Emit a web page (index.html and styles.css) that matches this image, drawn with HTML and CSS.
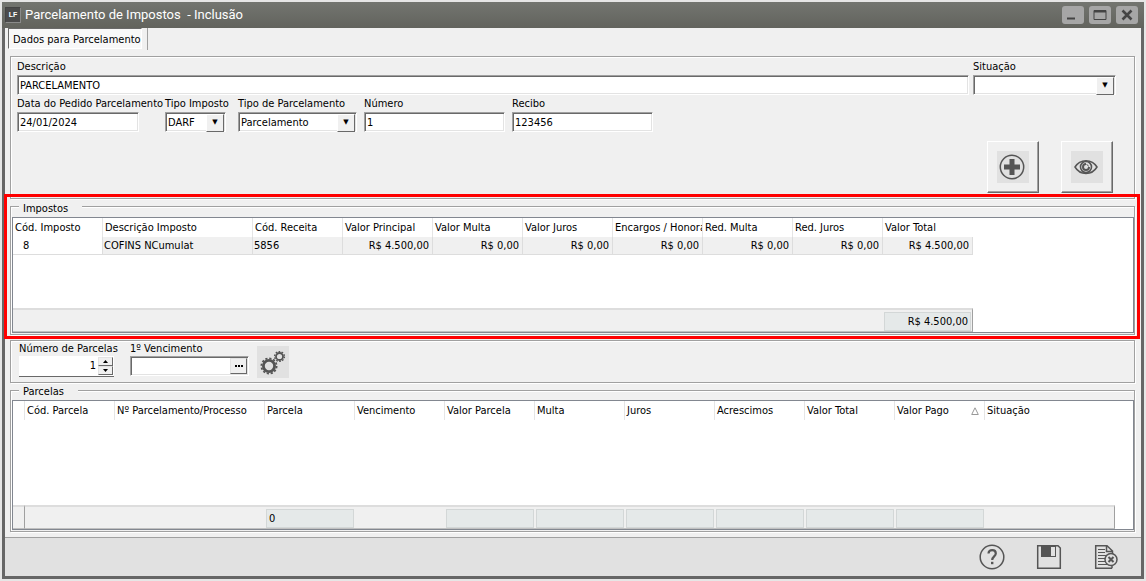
FILE: index.html
```html
<!DOCTYPE html>
<html lang="pt-BR">
<head>
<meta charset="utf-8">
<title>Parcelamento de Impostos - Inclusão</title>
<link rel="stylesheet" href="styles.css">
</head>
<body>
<div class="window">
  <header class="titlebar">
    <span class="app-icon">LF</span>
    <h1>Parcelamento de Impostos&nbsp; - Inclusão</h1>
    <div class="window-buttons">
      <button type="button" aria-label="Minimizar"><svg viewBox="0 0 22 18"><path d="M5 12.500h8" stroke="#444" stroke-width="2"/></svg></button>
      <button type="button" aria-label="Maximizar"><svg viewBox="0 0 22 18"><path d="M5 4.500h12v9H5z" fill="none" stroke="#444"/><path d="M5 5.500h12" stroke="#444" stroke-width="2"/></svg></button>
      <button type="button" aria-label="Fechar"><svg viewBox="0 0 22 18"><path d="M6.500 4.500l9 9M15.500 4.500l-9 9" stroke="#444" stroke-width="2.600"/></svg></button>
    </div>
  </header>
  <main class="content">
    <nav class="tabs"><button type="button" class="tab">Dados para Parcelamento</button></nav>

    <section class="panel form">
      <div class="row-top">
        <div class="field"><label for="descricao">Descrição</label><input id="descricao" class="box" value="PARCELAMENTO"></div>
        <div class="field"><label for="situacao">Situação</label><span class="combo"><select id="situacao" class="box"><option></option></select></span></div>
      </div>
      <div class="row-mid">
        <div class="field"><label for="data">Data do Pedido Parcelamento</label><input id="data" class="box date" value="24/01/2024"></div>
        <div class="field"><label for="tipo">Tipo Imposto</label><span class="combo short"><select id="tipo" class="box"><option>DARF</option></select></span></div>
        <div class="field"><label for="tipoparc">Tipo de Parcelamento</label><span class="combo"><select id="tipoparc" class="box"><option>Parcelamento</option></select></span></div>
        <div class="field"><label for="numero">Número</label><input id="numero" class="box" value="1"></div>
        <div class="field"><label for="recibo">Recibo</label><input id="recibo" class="box" value="123456"></div>
      </div>
      <div class="actions">
        <button type="button" class="big" aria-label="Adicionar"><svg viewBox="0 0 32 32"><circle cx="15" cy="16" r="11.700" fill="none" stroke="#555" stroke-width="1.500"/><path d="M15 8v16M7 16h16" stroke="#555" stroke-width="5"/></svg></button>
        <button type="button" class="big" aria-label="Visualizar"><svg viewBox="0 0 32 32" fill="none" stroke="#555"><path d="M4 16C9 7.500 21 7.500 26 16C21 24.500 9 24.500 4 16Z" stroke-width="1.500"/><circle cx="15" cy="16" r="5.500" stroke-width="1.600"/><path d="M15 13A3 3 0 1 0 18 16" stroke-width="2"/><path d="M15.500 13.500A2.500 2.500 0 0 1 17.500 15.500" stroke-width="1"/></svg></button>
      </div>
    </section>

    <section class="panel group impostos">
      <h2>Impostos</h2>
      <div class="grid">
        <table class="t-impostos">
          <colgroup><col class="w90"><col class="w150"><col class="w90"><col class="w90"><col class="w90"><col class="w90"><col class="w90"><col class="w90"><col class="w90"><col class="w90"></colgroup>
          <thead><tr><th>Cód. Imposto</th><th>Descrição Imposto</th><th>Cód. Receita</th><th>Valor Principal</th><th>Valor Multa</th><th>Valor Juros</th><th class="tight"><div class="clip">Encargos / Honorários</div></th><th>Red. Multa</th><th>Red. Juros</th><th>Valor Total</th></tr></thead>
          <tbody>
            <tr class="item"><td class="code">8</td><td>COFINS NCumulat</td><td>5856</td><td class="num">R$ 4.500,00</td><td class="num">R$ 0,00</td><td class="num">R$ 0,00</td><td class="num">R$ 0,00</td><td class="num">R$ 0,00</td><td class="num">R$ 0,00</td><td class="num">R$ 4.500,00</td></tr>
            <tr class="filler"><td colspan="10"></td></tr>
          </tbody>
          <tfoot><tr><td colspan="9"></td><td><div class="sum num">R$ 4.500,00</div></td></tr></tfoot>
        </table>
      </div>
      <div class="highlight"></div>
    </section>

    <section class="panel generate">
      <div class="field count"><label for="parcelas">Número de Parcelas</label>
        <span class="spin"><input id="parcelas" value="1"><span class="steps"><button type="button" aria-label="Aumentar"><svg viewBox="0 0 5 3"><path d="M0 3L2.500 0L5 3z"/></svg></button><button type="button" aria-label="Diminuir"><svg viewBox="0 0 5 3"><path d="M0 0L2.500 3L5 0z"/></svg></button></span></span></div>
      <div class="field"><label for="venc">1º Vencimento</label>
        <span class="box picker"><input id="venc"><button type="button" aria-label="Escolher data"><svg viewBox="0 0 8 2"><path d="M0 0h2v2H0zM3 0h2v2H3zM6 0h2v2H6z"/></svg></button></span></div>
      <button type="button" class="gear" aria-label="Gerar parcelas"><svg viewBox="0 0 32 32" fill="none" stroke="#555"><circle cx="12" cy="20" r="5.600" stroke-width="2.800"/><circle cx="12" cy="20" r="7.600" stroke-width="1.800" stroke-dasharray="2.200 1.780"/><circle cx="22.500" cy="10.500" r="3.500" stroke-width="1.800"/><circle cx="22.500" cy="10.500" r="4.900" stroke-width="1.400" stroke-dasharray="1.700 1.380"/></svg></button>
    </section>

    <section class="panel group parcelas">
      <h2>Parcelas</h2>
      <div class="grid">
        <table class="t-parcelas">
          <colgroup><col class="w12"><col class="w90"><col class="w150"><col class="w90"><col class="w90"><col class="w90"><col class="w90"><col class="w90"><col class="w90"><col class="w90"><col class="w90"><col class="w130"></colgroup>
          <thead><tr><th></th><th>Cód. Parcela</th><th>Nº Parcelamento/Processo</th><th>Parcela</th><th>Vencimento</th><th>Valor Parcela</th><th>Multa</th><th>Juros</th><th>Acrescimos</th><th>Valor Total</th><th><span class="sorted">Valor Pago <svg viewBox="0 0 8 8"><path d="M4 .8L7.300 7.500H.7z" fill="none" stroke="#999"/></svg></span></th><th>Situação</th></tr></thead>
          <tbody><tr class="filler"><td colspan="12"></td></tr></tbody>
          <tfoot><tr><td class="marker"></td><td colspan="2"></td><td><div class="sum">0</div></td><td></td><td><div class="sum"></div></td><td><div class="sum"></div></td><td><div class="sum"></div></td><td><div class="sum"></div></td><td><div class="sum"></div></td><td><div class="sum"></div></td><td></td></tr></tfoot>
        </table>
      </div>
    </section>
  </main>
  <footer class="toolbar">
    <button type="button" aria-label="Ajuda"><svg viewBox="0 0 26 26" fill="none" stroke="#555"><circle cx="13" cy="13" r="11.800" stroke-width="1.500"/><path d="M9.500 9.500C9.500 5 16.800 5 16.800 9.500C16.800 12.300 13.200 12.500 13.200 16" stroke-width="2.200"/><path d="M13.200 17.800v2.400" stroke-width="2.400"/></svg></button>
    <button type="button" aria-label="Salvar"><svg viewBox="0 0 26 26"><path d="M1.700 1.700H22l2.300 2.300V24.300H1.700z" fill="none" stroke="#555" stroke-width="1.500"/><path d="M5 1h15v12H5z" fill="#555"/><path d="M15 3h4v9h-4z" fill="#e1e1e1"/></svg></button>
    <button type="button" aria-label="Cancelar"><svg viewBox="0 0 26 26" fill="none" stroke="#555"><path d="M19 24.300H2.700V1.700H14L19.500 7V10M13.500 2v5.500H19M19 21.500v2.800" stroke-width="1.500"/><path d="M5 5.500h7M5 8.500h7M5 11.500h10M5 14.500h7M5 17.500h7M5 20.500h9"/><circle cx="18" cy="15.500" r="6" fill="#e1e1e1" stroke-width="1.500"/><path d="M15.500 13l5 5M20.500 13l-5 5" stroke-width="2"/></svg></button>
  </footer>
</div>
</body>
</html>
```
FILE: styles.css
```css
* { box-sizing: border-box; }
body { margin: 0; padding: 2px; background: #e6e6e6; color: #000; font: 11px/14px "DejaVu Sans Condensed", "Noto Sans", sans-serif; }
button, input, select { font: inherit; color: inherit; margin: 0; padding: 0; border: 0; border-radius: 0; background: none; min-width: 0; }
svg { display: block; }
.window { display: flex; flex-direction: column; min-height: calc(100vh - 4px); border: 3px solid #666; border-top: 0; background: #f0f0f0; }

.titlebar { display: flex; align-items: center; height: 26px; margin: 0 -3px; padding: 0 6px 0 3px; background: linear-gradient(#737570, #62635d); color: #fff; }
.titlebar h1 { flex: 1; margin: 0 0 0 4px; font: 13px/18px Roboto, "Noto Sans", sans-serif; }
.app-icon { display: grid; place-items: center; width: 16px; height: 16px; border: 1px solid #8a8a8a; border-top-color: #444; border-left-color: #444; background: #4b4b4b; font: bold 7px/8px "Liberation Sans", sans-serif; }
.window-buttons { display: flex; gap: 5px; }
.window-buttons button { width: 22px; height: 18px; border-radius: 3px; background: #a6a6a6; }

.content { flex: 1; padding: 0 6px 5px 5px; }
.tabs { display: flex; align-items: flex-start; width: 140px; height: 22px; margin-left: -2px; border-right: 1px solid #a0a0a0; }
.tab { width: 134px; height: 21px; padding: 2px 0 0 4px; border: 1px solid #fff; border-top-color: #696969; border-left-color: #696969; background: #f8f8f8; text-align: left; white-space: nowrap; }

.panel { border: 1px solid #a0a0a0; box-shadow: 1px 1px #fff, inset 1px 1px #fff; }
.form { margin-top: 6px; padding: 3px 18px 5px 6px; }
.row-top { display: grid; grid-template-columns: 1fr 143px; gap: 4px; }
.row-mid { display: grid; grid-template-columns: 141px 66px 119px 141px 141px; gap: 7px; margin-top: 2px; }
.field { display: flex; flex-direction: column; }
.field label { white-space: nowrap; }
.form .field { gap: 1px; }
.box { display: block; width: 100%; height: 20px; padding: 0 2px; border: 1px solid #fff; border-top-color: #a0a0a0; border-left-color: #a0a0a0; background: #fff; box-shadow: inset 1px 1px #696969, inset -1px -1px #e3e3e3; }
input, select { outline: 0; }
.date { width: 122px; }
.combo { position: relative; display: block; }
.short { width: 61px; }
.combo select { appearance: none; padding: 2px 18px 0 2px; }
.combo::after { content: "▼"; position: absolute; top: 2px; right: 2px; width: 16px; height: 16px; border: 1px solid #696969; border-top-color: #fff; border-left-color: #fff; background: #f0f0f0; font: 7px/15px "DejaVu Sans", sans-serif; text-align: center; pointer-events: none; }
.actions { display: flex; justify-content: flex-end; gap: 22px; margin-top: 9px; padding-right: 3px; }
.big { display: grid; place-items: center; width: 52px; height: 52px; border: 1px solid #696969; border-top-color: #fff; border-left-color: #fff; box-shadow: inset -1px -1px #a0a0a0; }
.big svg { width: 32px; height: 32px; background: #e1e1e1; }

.group { position: relative; margin-top: 7px; padding: 0 0 1px 1px; }
.group h2 { width: max-content; margin: -7px 0 0 7px; padding: 0 14px 0 4px; background: #f0f0f0; font: inherit; line-height: 16px; }
.impostos h2 { padding-top: 1px; }
.grid { border: 1px solid #828790; background: #fff; }
.highlight { position: absolute; inset: -13px -6px -5px -7px; border: 3px solid #f00; pointer-events: none; }

table { table-layout: fixed; border-collapse: separate; border-spacing: 0; }
.t-impostos { width: 960px; height: 114px; }
.t-parcelas { width: 1102px; height: 128px; }
.w12 { width: 12px; }
.w90 { width: 90px; }
.w150 { width: 150px; }
.w130 { width: 130px; }
th, td { padding: 0 2px; overflow: hidden; white-space: nowrap; }
th { height: 19px; padding-top: 1px; border-right: 1px solid #e5e5e5; font-weight: normal; text-align: left; }
th:last-child { border-right: 0; }
.tight { padding-right: 0; }
.clip { overflow: hidden; }
.sorted { display: flex; justify-content: space-between; align-items: center; }
.sorted svg { width: 8px; height: 8px; margin-right: 3px; }
.item td { height: 18px; padding: 1px 3px 0 1px; border: solid #ddd; border-width: 0 1px 1px 0; background: #f0f0f0; }
.item .code { padding-left: 10px; background: #fff; }
td.num, div.num { text-align: right; }
tfoot td { height: 24px; padding: 1px 1px 0; border-top: 2px solid #ddd; border-bottom: 1px solid #c0c0c0; background: #f0f0f0; }
tfoot td:last-child { border-right: 1px solid #a0a0a0; }
tfoot .marker { border-right: 1px solid #a0a0a0; }
.sum { height: 19px; padding: 0 2px; border: 1px solid #d3d7d7; background: #e5e9e9; line-height: 18px; }

.generate { display: flex; align-items: flex-start; margin-top: 5px; padding: 1px 8px 4px; }
.count { width: 95px; margin-right: 16px; }
.spin { display: flex; width: 95px; height: 21px; padding: 1px; border-bottom: 1px solid #696969; background: #fff; }
.spin input { flex: 1; padding-right: 2px; text-align: right; }
.steps { display: grid; width: 15px; }
.steps button, .picker button { display: grid; place-items: center; border: 1px solid #696969; border-top-color: #e3e3e3; border-left-color: #e3e3e3; background: #f0f0f0; }
.steps svg { width: 5px; height: 3px; }
.picker { display: flex; width: 119px; padding: 1px; }
.picker input { flex: 1; }
.picker button { width: 17px; }
.picker svg { width: 8px; height: 2px; }
.gear { width: 32px; height: 32px; margin: 4px 0 0 8px; background: #e1e1e1; }

.toolbar { display: flex; justify-content: flex-end; gap: 31px; padding: 6px 22px; border-top: 1px solid #a0a0a0; background: #e1e1e1; }
.toolbar button, .toolbar svg { width: 26px; height: 26px; }
```
